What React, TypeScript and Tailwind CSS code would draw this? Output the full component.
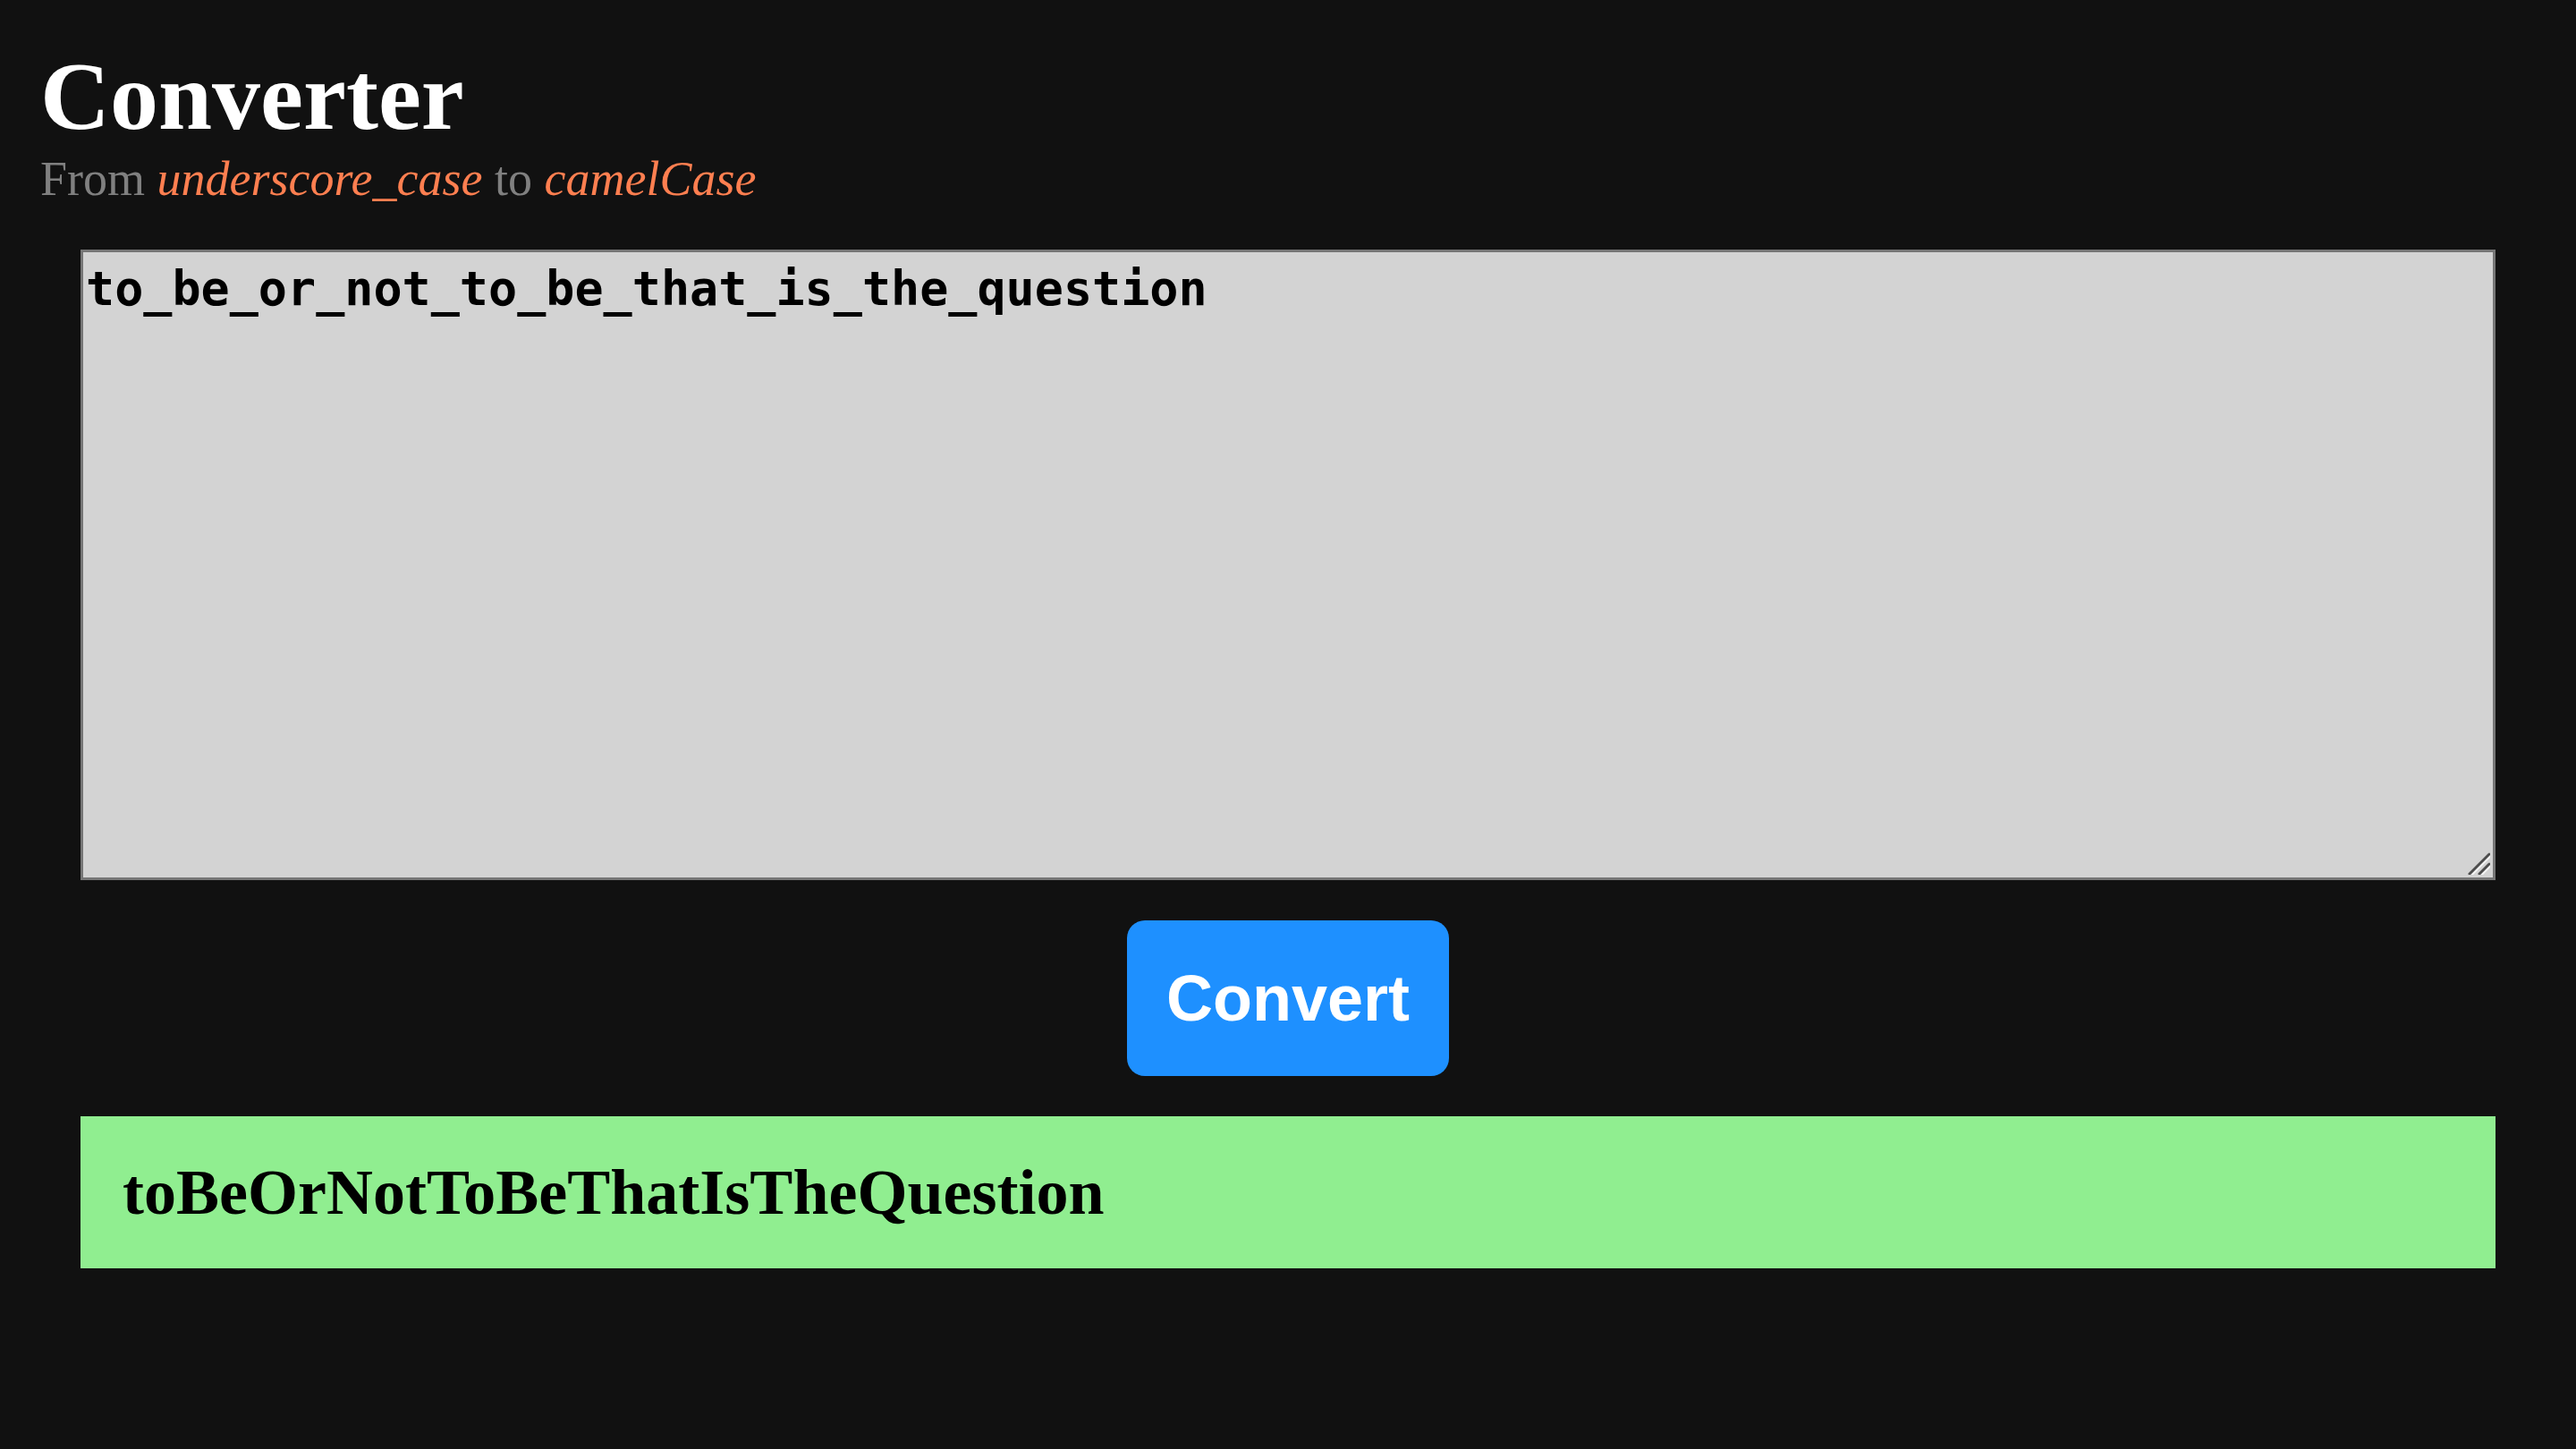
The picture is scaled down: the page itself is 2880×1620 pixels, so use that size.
export default function App() {
  return (
    <div className="min-h-screen w-full bg-[#111111] pb-[200px]">
      {/* Heading */}
      <div className="pl-[45px] pt-[54px]">
        <h1 className="font-['Liberation_Serif',serif] text-[108px] font-bold leading-[108px] text-white">
          Converter
        </h1>
        <p className="mt-[11px] font-['Liberation_Serif',serif] text-[54px] leading-[54px] text-[#808080]">
          From <em className="text-[#ff7f50]">underscore_case</em> to{" "}
          <em className="text-[#ff7f50]">camelCase</em>
        </p>
      </div>

      <div className="mt-[52px] px-[90px]">
        {/* Input */}
        <div className="relative">
          <textarea
            defaultValue="to_be_or_not_to_be_that_is_the_question"
            spellCheck={false}
            className="block h-[705px] w-full resize-none border-[3px] border-[#767676] bg-[#d3d3d3] px-[3px] pt-[1px] font-['DejaVu_Sans_Mono',monospace] text-[53.4px] font-bold text-black outline-none"
          />
          <svg
            className="pointer-events-none absolute bottom-[6px] right-[6px]"
            width="30"
            height="30"
            viewBox="0 0 30 30"
          >
            <path d="M7 29 L29 7" stroke="#fff" strokeWidth="3" strokeLinecap="round" opacity="0.75" transform="translate(1.5 1.5)" />
            <path d="M7 29 L29 7" stroke="#4d4d4d" strokeWidth="3" strokeLinecap="round" />
            <path d="M18 29 L29 18" stroke="#fff" strokeWidth="3" strokeLinecap="round" opacity="0.75" transform="translate(1.5 1.5)" />
            <path d="M18 29 L29 18" stroke="#4d4d4d" strokeWidth="3" strokeLinecap="round" />
          </svg>
        </div>

        {/* Action */}
        <div className="mt-[45px] flex justify-center">
          <button className="h-[174px] w-[360px] rounded-[20px] bg-[#1e90ff] font-['Liberation_Sans',Arial,sans-serif] text-[72px] font-bold text-white">
            Convert
          </button>
        </div>

        {/* Result */}
        <div className="mt-[45px] bg-[#90ee90] px-[47px] py-[49px] font-['Liberation_Serif',serif] text-[72px] font-bold leading-[72px] text-black">
          toBeOrNotToBeThatIsTheQuestion
        </div>
      </div>
    </div>
  );
}
